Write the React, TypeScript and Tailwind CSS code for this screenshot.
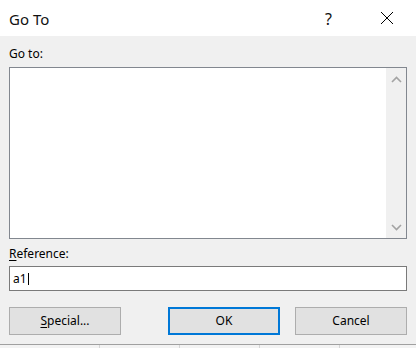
import React from "react";

const font = { fontFamily: '"Noto Sans", "Open Sans", sans-serif' };

export default function App() {
  return (
    <div className="w-[416px] h-[348px] overflow-hidden flex flex-col bg-[#f0f0f0] text-black" style={font}>
      {/* Title bar */}
      <div className="h-[36px] bg-white flex items-center shrink-0">
        <div className="pl-[9px] text-[15px] leading-[20px] pt-[1px] text-[#111]">Go To</div>
        <div className="flex-1" />
        <div className="w-[9px] text-[16px] leading-[20px] mr-[46px] pt-[1px] text-[#111]">?</div>
        <svg width="14" height="14" viewBox="0 0 14 14" className="mr-[22px]">
          <path d="M1 1 L13 13 M13 1 L1 13" stroke="#000" strokeWidth="1" fill="none" />
        </svg>
      </div>

      {/* Body */}
      <div className="h-[309px] shrink-0 px-[9px] flex flex-col border-b border-[#a0a0a0]">
        <div className="h-[31px] pt-[10px] text-[12px] leading-[16px]">Go to:</div>
        <div className="h-[172px] border border-[#82878f] bg-white flex">
          <div className="flex-1" />
          <div className="w-[20px] bg-[#f0f0f0] flex flex-col justify-between">
            <div className="h-[17px] flex items-center justify-center pt-[5px]">
              <svg width="11" height="7" viewBox="0 0 11 7">
                <path d="M1 6 L5.5 1.5 L10 6" stroke="#a3a3a3" strokeWidth="1.6" fill="none" />
              </svg>
            </div>
            <div className="h-[17px] flex items-center justify-center pb-[5px]">
              <svg width="11" height="7" viewBox="0 0 11 7">
                <path d="M1 1 L5.5 5.5 L10 1" stroke="#a3a3a3" strokeWidth="1.6" fill="none" />
              </svg>
            </div>
          </div>
        </div>
        <div className="h-[27px] pt-[7px] text-[12px] leading-[16px]">
          <span className="underline underline-offset-2">R</span>eference:
        </div>
        <div className="h-[25px] border border-[#7a7a7a] bg-white flex items-center pl-[3px] text-[12px] leading-[16px]">
          <span>a1</span>
          <span className="w-[1px] h-[12px] bg-black ml-[1px]" />
        </div>
        <div className="flex mt-[16px] text-[12px] leading-[16px]">
          <div className="w-[112px] h-[28px] border border-[#adadad] bg-[#e1e1e1] flex items-center justify-center">
            <span><span className="underline underline-offset-2">S</span>pecial...</span>
          </div>
          <div className="w-[112px] h-[28px] ml-[47px] border-2 border-[#0078d7] bg-[#e1e1e1] flex items-center justify-center">
            OK
          </div>
          <div className="w-[112px] h-[28px] ml-[15px] border border-[#adadad] bg-[#e1e1e1] flex items-center justify-center">
            Cancel
          </div>
        </div>
      </div>

      {/* Sheet strip behind */}
      <div className="h-[3px] bg-[#f3f3f3] flex">
        <div className="w-[100px] border-r border-[#d4d4d4]" />
        <div className="w-[80px] border-r border-[#d4d4d4]" />
        <div className="w-[80px] border-r border-[#d4d4d4]" />
        <div className="w-[80px] border-r border-[#d4d4d4]" />
      </div>
    </div>
  );
}
